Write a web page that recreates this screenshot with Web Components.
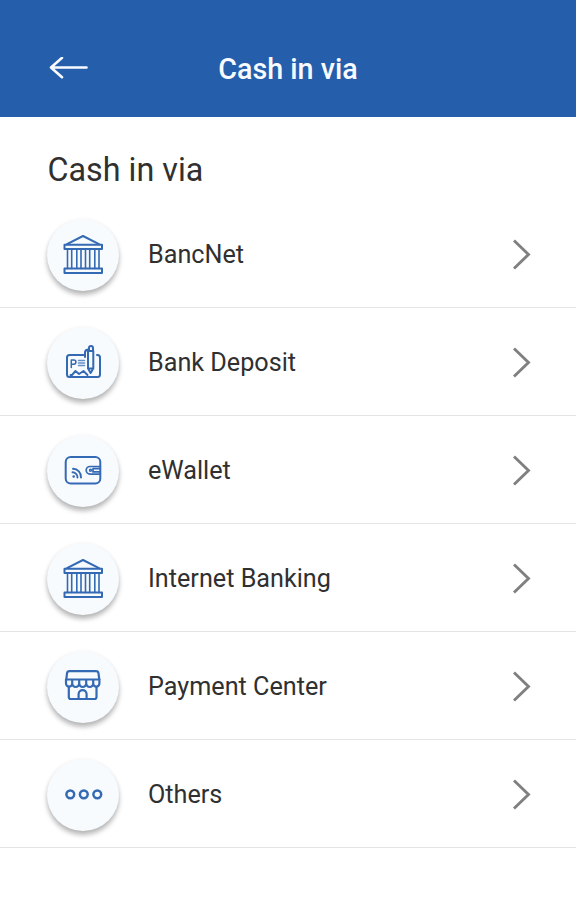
<!DOCTYPE html>
<html lang="en">
<head>
<meta charset="utf-8">
<title>Cash in via</title>
<style>
  body {
    margin: 0;
    background: #fff;
    font-family: Roboto, "Liberation Sans", sans-serif;
    color: #303030;
  }
</style>
</head>
<body>
<cash-in-page heading="Cash in via">
  <cash-in-option icon="bank">BancNet</cash-in-option>
  <cash-in-option icon="deposit">Bank Deposit</cash-in-option>
  <cash-in-option icon="wallet">eWallet</cash-in-option>
  <cash-in-option icon="bank">Internet Banking</cash-in-option>
  <cash-in-option icon="store">Payment Center</cash-in-option>
  <cash-in-option icon="others">Others</cash-in-option>
</cash-in-page>

<script>
const icons = {
  bank: `
    <path d="M20.5 25.2 36.5 17 52.5 25.2"/>
    <path d="M18 25.8h37.500v4.200h-37.500zM18 49.500h37.500v4.500h-37.500z"/>
    <path d="M21 30v19.500M25.200 30v19.500M30.300 30v19.500M34.500 30v19.500M39 30v19.500M43.200 30v19.500M48.300 30v19.500M52.500 30v19.500" stroke-width="1.6"/>`,
  deposit: `
    <path d="M37.500 28H23a2.500 2.500 0 0 0-2.500 2.500v17a2.500 2.500 0 0 0 2.500 2.500h28a2.500 2.500 0 0 0 2.500-2.500V30.500a2.500 2.500 0 0 0-2.500-2.500h-.5"/>
    <path d="M24 48h1.500L29 44 32.500 47 37 44 41 48" stroke-width="1.900"/>
    <path d="M24.800 40.500v-7.500h2.500a2 2 0 0 1 0 4.200h-2.500" stroke-width="1.500"/>
    <path d="M32 33.500h6M32 36h6M32 38.500h6" stroke-width="1.500" opacity=".75"/>
    <path d="M41.500 24v17.500l2.600 4.500 2.700-4.500V24zM42.500 24v-3a2 2 0 0 1 4 0v3M41.500 41.500h5.300M41.500 22.500q-3 .5-3 3v4.500"/>`,
  wallet: `
    <rect x="19.200" y="22" width="34.600" height="26.500" rx="5"/>
    <path d="M53.500 31.500H43.500a3.800 3.800 0 0 0 0 7.600H53.500M53.500 33.700h-7v3.200h7" stroke-width="1.700"/>
    <circle cx="44" cy="35.300" r="1" stroke-width="1.400"/>
    <path d="M26.500 33.800a8.200 8.200 0 0 1 8 8.700M26 37.300a5 5 0 0 1 5 5.200" stroke-width="1.900"/>
    <circle cx="27.200" cy="41.500" r="1.300" fill="currentColor" stroke="none"/>`,
  store: `
    <g stroke-width="2.200">
      <path d="M19.800 28.500 20.500 22.300Q20.800 20.200 23 20.200H49.500Q51.700 20.200 52 22.300L52.800 28.500Z"/>
      <path d="M19.500 28.500v4a3.100 3.100 0 0 0 6.200 0v-3.500v3.500a3.500 3.500 0 0 0 7 0v-3.500v3.500a3.500 3.500 0 0 0 7 0v-3.500v3.500a3.500 3.500 0 0 0 7 0v-3.500v3.500a3.100 3.100 0 0 0 6.200 0v-4"/>
      <path d="M22.300 36v10a2 2 0 0 0 2 2h23.700a2 2 0 0 0 2-2V36M32.100 47.500v-4.300a4 4 0 0 1 8 0v4.300"/>
    </g>`,
  others: `
    <g stroke-width="2.500"><circle cx="23.800" cy="35.300" r="3.900"/><circle cx="37.300" cy="35.300" r="3.900"/><circle cx="50.800" cy="35.300" r="3.900"/></g>`
};

class CashInPage extends HTMLElement {
  constructor() {
    super();
    this.attachShadow({ mode: "open" });
  }
  connectedCallback() {
    const heading = this.getAttribute("heading");
    this.shadowRoot.innerHTML = `
      <style>
        :host { display: block; }
        h2 {
          margin: 0;
          padding: 33px 47.500px 0;
          height: 50px;
          font-size: 32.300px;
          font-weight: 400;
          line-height: 40px;
        }
      </style>
      <app-header>${heading}</app-header>
      <h2>${heading}</h2>
      <slot></slot>
    `;
  }
}

class AppHeader extends HTMLElement {
  constructor() {
    super();
    this.attachShadow({ mode: "open" });
  }
  connectedCallback() {
    this.shadowRoot.innerHTML = `
      <style>
        :host {
          display: grid;
          grid-template-columns: 40px 1fr 40px;
          align-items: center;
          box-sizing: border-box;
          height: 117px;
          padding: 21px 48px 0;
          background: #255eab;
          color: #f8fbff;
        }
        h1 {
          margin: 0;
          text-align: center;
          font-size: 28.700px;
          font-weight: 500;
          line-height: 36px;
        }
        svg { display: block; }
      </style>
      <svg width="40" height="24" viewBox="0 0 40 24" fill="none" stroke="currentColor" stroke-width="2.600" stroke-linecap="round" stroke-linejoin="round">
        <path d="M38.500 10.500H3M14 .8 3 10.500 14 20.200"/>
      </svg>
      <h1><slot></slot></h1>
    `;
  }
}

class CashInOption extends HTMLElement {
  constructor() {
    super();
    this.attachShadow({ mode: "open" });
  }
  connectedCallback() {
    this.shadowRoot.innerHTML = `
      <style>
        :host {
          display: flex;
          align-items: center;
          box-sizing: border-box;
          height: 108px;
          padding: 2px 44px 0 47px;
          border-bottom: 1px solid #e4e4e4;
          font-size: 25.200px;
          line-height: 32px;
        }
        .icon {
          width: 72px;
          height: 72px;
          border-radius: 50%;
          background: #f7fbfe;
          color: #3469b3;
          box-shadow: 0 4px 5px rgba(0, 0, 0, .28), 0 0 4px rgba(0, 0, 0, .04);
        }
        .label { flex: 1; margin-left: 29px; }
        svg { display: block; }
      </style>
      <div class="icon">
        <svg width="72" height="72" viewBox="0.500 0 72 72" fill="none" stroke="currentColor" stroke-width="2" stroke-linecap="round" stroke-linejoin="round">${icons[this.getAttribute("icon")]}</svg>
      </div>
      <span class="label"><slot></slot></span>
      <svg width="20" height="32" viewBox="0 0 20 32" fill="none" stroke="#808080" stroke-width="2.900">
        <path d="M2 1.500 16.500 15.500 2 29.500"/>
      </svg>
    `;
  }
}

customElements.define("app-header", AppHeader);
customElements.define("cash-in-option", CashInOption);
customElements.define("cash-in-page", CashInPage);
</script>
</body>
</html>
